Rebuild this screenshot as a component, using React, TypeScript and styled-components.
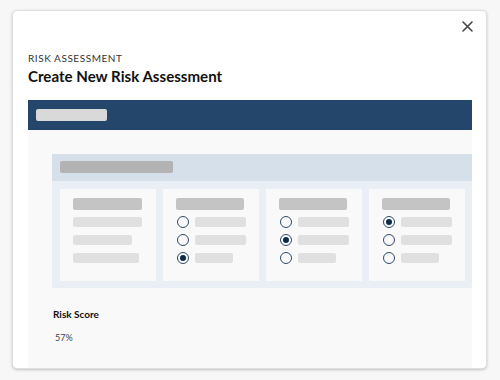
import React from "react";
import styled, { createGlobalStyle } from "styled-components";

const Global = createGlobalStyle`
  html, body { margin: 0; padding: 0; }
  body {
    background: #f7f7f7;
    font-family: Lato, "Noto Sans", sans-serif;
    width: 500px;
    height: 380px;
    overflow: hidden;
  }
`;

const Modal = styled.div`
  position: relative;
  box-sizing: border-box;
  margin: 10px 0 0 12px;
  width: 475px;
  height: 359px;
  background: #ffffff;
  border: 1px solid #dedede;
  border-radius: 5px;
  box-shadow: 0 1px 3px rgba(0, 0, 0, 0.22);
  overflow: hidden;
  padding: 41px 14px 0 15px;
`;

const Close = styled.button`
  position: absolute;
  top: 6px;
  right: 10px;
  width: 18px;
  height: 18px;
  padding: 0;
  border: none;
  background: transparent;
  display: flex;
  align-items: center;
  justify-content: center;
`;

const Eyebrow = styled.div`
  font-size: 10px;
  line-height: 13px;
  letter-spacing: 0.55px;
  color: #333;
`;

const Title = styled.h1`
  margin: 2px 0 0;
  font-size: 15.1px;
  line-height: 19px;
  font-weight: 700;
  color: #111;
`;

const Panel = styled.div`
  margin-top: 14px;
  width: 444px;
  height: 400px;
  overflow: hidden;
  background: #f9f9f9;
`;

const PanelHeader = styled.div`
  height: 30px;
  background: #25466b;
  padding: 9px 8px;
  box-sizing: border-box;
`;

const Bar = styled.div<{ $w: number; $h?: number; $c: string }>`
  width: ${(p) => p.$w}px;
  height: ${(p) => p.$h ?? 10}px;
  background: ${(p) => p.$c};
  border-radius: 2px;
  flex-shrink: 0;
`;

const PanelBody = styled.div`
  padding: 24px 0 0 24px;
`;

const Card = styled.div`
  width: 440px;
`;

const CardHeader = styled.div`
  height: 27px;
  box-sizing: border-box;
  background: #d6e0ea;
  padding: 7px 8px;
`;

const CardBody = styled.div`
  background: #e9eff5;
  padding: 8px 8px 7px;
  display: flex;
  gap: 7px;
`;

const Column = styled.div`
  width: 96px;
  height: 92px;
  box-sizing: border-box;
  background: #f9f9f9;
  padding: 9px 13px 0 13px;
  display: flex;
  flex-direction: column;
  gap: 6px;
`;

const Row = styled.div`
  height: 12px;
  display: flex;
  align-items: center;
  gap: 6px;
`;

const Radio = styled.span<{ $on?: boolean }>`
  box-sizing: border-box;
  width: 12px;
  height: 12px;
  border-radius: 50%;
  border: 1.3px solid #2e4b6b;
  display: flex;
  align-items: center;
  justify-content: center;
  flex-shrink: 0;
  margin-left: 1px;
  &::after {
    content: "";
    display: ${(p) => (p.$on ? "block" : "none")};
    width: 6px;
    height: 6px;
    border-radius: 50%;
    background: #0f2a4a;
  }
`;

const ScoreLabel = styled.div`
  margin-top: 20px;
  margin-left: 1px;
  font-size: 10px;
  line-height: 13px;
  font-weight: 700;
  color: #111;
`;

const ScoreValue = styled.div`
  margin-top: 11px;
  margin-left: 3px;
  font-size: 9px;
  line-height: 12px;
  color: #444;
`;

const HEAD = "#c4c4c4";
const LINE = "#e0e0e0";

const radioCols: { sel: number; widths: number[] }[] = [
  { sel: 2, widths: [51, 51, 38] },
  { sel: 1, widths: [51, 51, 38] },
  { sel: 0, widths: [51, 51, 38] },
];

export default function App() {
  return (
    <>
      <Global />
      <Modal>
        <Close aria-label="Close">
          <svg width="11" height="11" viewBox="0 0 11 11">
            <path d="M1 1L10 10M10 1L1 10" stroke="#444" strokeWidth="1.6" strokeLinecap="round" />
          </svg>
        </Close>
        <Eyebrow>RISK ASSESSMENT</Eyebrow>
        <Title>Create New Risk Assessment</Title>
        <Panel>
          <PanelHeader>
            <Bar $w={71} $h={12} $c="#d9d9d9" />
          </PanelHeader>
          <PanelBody>
            <Card>
              <CardHeader>
                <Bar $w={113} $h={12} $c="#b3b3b3" />
              </CardHeader>
              <CardBody>
                <Column>
                  <Row>
                    <Bar $w={69} $h={12} $c={HEAD} />
                  </Row>
                  <Row>
                    <Bar $w={69} $c={LINE} />
                  </Row>
                  <Row>
                    <Bar $w={59} $c={LINE} />
                  </Row>
                  <Row>
                    <Bar $w={66} $c={LINE} />
                  </Row>
                </Column>
                {radioCols.map((col, ci) => (
                  <Column key={ci}>
                    <Row>
                      <Bar $w={68} $h={12} $c={HEAD} />
                    </Row>
                    {col.widths.map((w, i) => (
                      <Row key={i}>
                        <Radio $on={i === col.sel} />
                        <Bar $w={w} $c={LINE} />
                      </Row>
                    ))}
                  </Column>
                ))}
              </CardBody>
            </Card>
            <ScoreLabel>Risk Score</ScoreLabel>
            <ScoreValue>57%</ScoreValue>
          </PanelBody>
        </Panel>
      </Modal>
    </>
  );
}
